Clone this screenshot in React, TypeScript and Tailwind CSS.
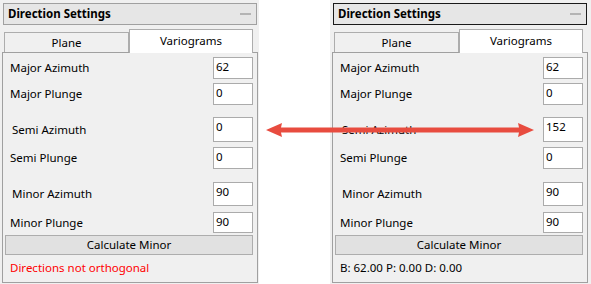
import React from "react";

const FONT = { fontFamily: '"Noto Sans", "Open Sans", sans-serif' };

type RowDef = { label: string; value: string; h: string; mt: string; pl: string };

function Row({ r }: { r: RowDef }) {
  return (
    <div className={`flex items-center justify-between pr-[4px] ${r.mt} ${r.pl}`}>
      <span className="text-[11.5px] leading-[16px] text-black">{r.label}</span>
      <div
        className={`w-[40px] ${r.h} border border-[#ababab] bg-white pl-[2px] pt-[1px] text-[11.5px] leading-[16px] text-black`}
      >
        {r.value}
      </div>
    </div>
  );
}

function Panel({
  values,
  footer,
  footerClass,
  focused,
  width,
}: {
  values: string[];
  footer: string;
  footerClass: string;
  focused: boolean;
  width: string;
}) {
  const rows: RowDef[] = [
    { label: "Major Azimuth", value: values[0], h: "h-[22px]", mt: "mt-[4px]", pl: "pl-[7px]" },
    { label: "Major Plunge", value: values[1], h: "h-[22px]", mt: "mt-[4px]", pl: "pl-[7px]" },
    { label: "Semi Azimuth", value: values[2], h: "h-[25px]", mt: "mt-[12px]", pl: "pl-[9px]" },
    { label: "Semi Plunge", value: values[3], h: "h-[22px]", mt: "mt-[5px]", pl: "pl-[7px]" },
    { label: "Minor Azimuth", value: values[4], h: "h-[24px]", mt: "mt-[13px]", pl: "pl-[9px]" },
    { label: "Minor Plunge", value: values[5], h: "h-[21px]", mt: "mt-[6px]", pl: "pl-[7px]" },
  ];
  return (
    <div className={`${width} h-[284px] bg-[#f0f0f0] flex flex-col pt-[3px]`} style={FONT}>
      <div
        className={`ml-[3px] w-[254px] h-[22px] border ${
          focused ? "border-[#1a1a1a]" : "border-[#a0a0a0]"
        } bg-[#e6e6e6] flex items-center justify-between pl-[4px] pr-[5px]`}
      >
        <span className="text-[11.5px] font-bold text-black leading-[16px]">Direction Settings</span>
        <div className="w-[11px] h-[2px] bg-[#b4b4b4]" />
      </div>
      <div className="mt-[4px] flex items-end pl-[4px]">
        <div className="w-[125px] h-[20px] border border-b-0 border-[#adadad] bg-[#f0f0f0] flex items-center justify-center text-[11.5px] text-black leading-[16px]">
          Plane
        </div>
        <div className="relative z-10 w-[124px] h-[24px] -mb-[1px] border border-b-0 border-[#adadad] bg-white flex items-start justify-center pt-[3px] text-[11.5px] text-black leading-[16px]">
          Variograms
        </div>
      </div>
      <div className="ml-[2px] w-[256px] h-[231px] border border-[#a0a0a0] bg-[#f0f0f0] flex flex-col">
        {rows.map((r) => (
          <Row key={r.label} r={r} />
        ))}
        <div className="mt-[2px] ml-[2px] w-[248px] h-[20px] border border-[#adadad] bg-[#e1e1e1] flex items-center justify-center text-[11.5px] leading-[16px] text-black">
          Calculate Minor
        </div>
        <div className={`mt-[5px] pl-[7px] text-[11.5px] leading-[16px] ${footerClass}`}>{footer}</div>
      </div>
    </div>
  );
}

export default function App() {
  return (
    <div className="relative w-[591px] h-[284px] bg-white flex overflow-hidden">
      <Panel
        values={["62", "0", "0", "0", "90", "90"]}
        footer="Directions not orthogonal"
        footerClass="text-[#ff0000]"
        focused={false}
        width="w-[259px]"
      />
      <div className="w-[71px]" />
      <Panel
        values={["62", "0", "152", "0", "90", "90"]}
        footer="B: 62.00 P: 0.00 D: 0.00"
        footerClass="text-black"
        focused={true}
        width="w-[261px]"
      />
      <svg
        className="absolute left-[264px] top-[121px]"
        width="272"
        height="18"
        viewBox="0 0 272 18"
      >
        <polygon
          points="2,9 18,2 17,6.6 255,6.6 254,2 270,9 254,16 255,11.4 17,11.4 18,16"
          fill="#e84c3f"
        />
      </svg>
    </div>
  );
}
